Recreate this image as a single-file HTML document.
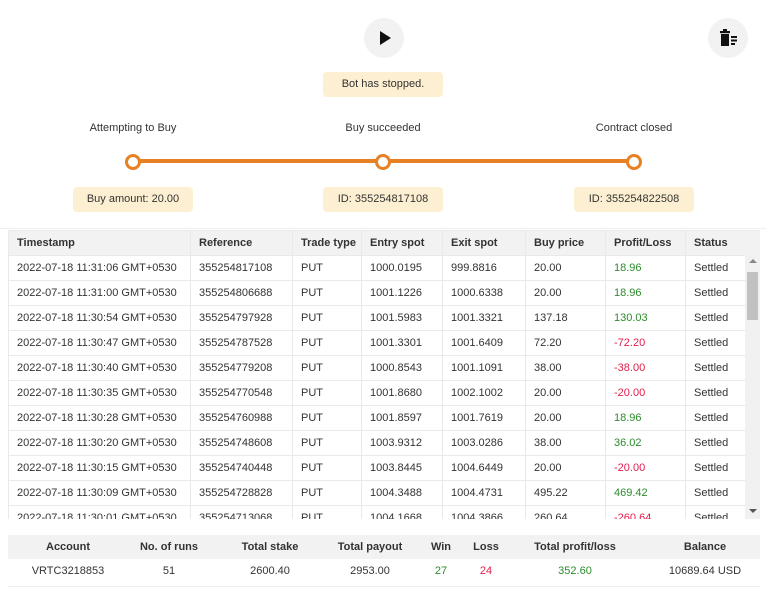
<!DOCTYPE html><html><head><style>
body{margin:0;width:766px;height:589px;background:#fff;font-family:"Liberation Sans",sans-serif;font-size:11px;color:#333;position:relative;overflow:hidden}
.a{position:absolute}
.btn{width:40px;height:40px;border-radius:50%;background:#f2f2f2}
.tip{background:#fdf0d2;border-radius:4px;height:25px;line-height:25px;text-align:center;color:#333}
.lbl{width:160px;text-align:center}
.dot{width:10px;height:10px;border:3px solid #e88024;border-radius:50%;background:#fff}
table{border-collapse:collapse;font-size:11px;table-layout:fixed}
td,th{height:24px;padding:0 0 0 8px;text-align:left;border:1px solid #e9e9e9;white-space:nowrap;overflow:hidden}
th{background:#f2f2f2;font-weight:bold;color:#333}
.g{color:#2c8c2c}.r{color:#e31c4b}
#f td,#f th{text-align:center;border:none;padding:0}
</style></head><body>
<div class="a btn" style="left:364px;top:18px"><svg width="40" height="40"><path d="M16 13v14l11-7z" fill="#111"/></svg></div>
<div class="a btn" style="left:708px;top:18px"><svg width="40" height="40"><rect x="12" y="13" width="10" height="2.2" fill="#111"/><rect x="15" y="11" width="4" height="3" fill="#111"/><path d="M13 16h8v12h-8z" fill="#111"/><rect x="23" y="18" width="6" height="2" fill="#111"/><rect x="23" y="21.5" width="6" height="2" fill="#111"/><rect x="23" y="25" width="4" height="2" fill="#111"/></svg></div>
<div class="a tip" style="left:323px;top:72px;width:120px">Bot has stopped.</div>
<div class="a lbl" style="left:53px;top:122px">Attempting to Buy</div>
<div class="a lbl" style="left:303px;top:122px">Buy succeeded</div>
<div class="a lbl" style="left:554px;top:122px">Contract closed</div>
<div class="a" style="left:133px;top:159px;width:500px;height:4px;background:#e88024"></div>
<div class="a dot" style="left:125px;top:154px"></div>
<div class="a dot" style="left:375px;top:154px"></div>
<div class="a dot" style="left:626px;top:154px"></div>
<div class="a tip" style="left:73px;top:187px;width:120px">Buy amount: 20.00</div>
<div class="a tip" style="left:323px;top:187px;width:120px">ID: 355254817108</div>
<div class="a tip" style="left:574px;top:187px;width:120px">ID: 355254822508</div>
<div class="a" style="left:0;top:228px;width:766px;height:1px;background:#eee"></div>
<div class="a" style="left:8px;top:230px;width:752px;height:289px;overflow:hidden">
<table style="width:752px">
<colgroup><col style="width:182px"><col style="width:102px"><col style="width:69px"><col style="width:81px"><col style="width:83px"><col style="width:80px"><col style="width:80px"><col style="width:75px"></colgroup>
<tr><th>Timestamp</th><th>Reference</th><th>Trade type</th><th>Entry spot</th><th>Exit spot</th><th>Buy price</th><th>Profit/Loss</th><th>Status</th></tr>
<tr><td>2022-07-18 11:31:06 GMT+0530</td><td>355254817108</td><td>PUT</td><td>1000.0195</td><td>999.8816</td><td>20.00</td><td class="g">18.96</td><td>Settled</td></tr>
<tr><td>2022-07-18 11:31:00 GMT+0530</td><td>355254806688</td><td>PUT</td><td>1001.1226</td><td>1000.6338</td><td>20.00</td><td class="g">18.96</td><td>Settled</td></tr>
<tr><td>2022-07-18 11:30:54 GMT+0530</td><td>355254797928</td><td>PUT</td><td>1001.5983</td><td>1001.3321</td><td>137.18</td><td class="g">130.03</td><td>Settled</td></tr>
<tr><td>2022-07-18 11:30:47 GMT+0530</td><td>355254787528</td><td>PUT</td><td>1001.3301</td><td>1001.6409</td><td>72.20</td><td class="r">-72.20</td><td>Settled</td></tr>
<tr><td>2022-07-18 11:30:40 GMT+0530</td><td>355254779208</td><td>PUT</td><td>1000.8543</td><td>1001.1091</td><td>38.00</td><td class="r">-38.00</td><td>Settled</td></tr>
<tr><td>2022-07-18 11:30:35 GMT+0530</td><td>355254770548</td><td>PUT</td><td>1001.8680</td><td>1002.1002</td><td>20.00</td><td class="r">-20.00</td><td>Settled</td></tr>
<tr><td>2022-07-18 11:30:28 GMT+0530</td><td>355254760988</td><td>PUT</td><td>1001.8597</td><td>1001.7619</td><td>20.00</td><td class="g">18.96</td><td>Settled</td></tr>
<tr><td>2022-07-18 11:30:20 GMT+0530</td><td>355254748608</td><td>PUT</td><td>1003.9312</td><td>1003.0286</td><td>38.00</td><td class="g">36.02</td><td>Settled</td></tr>
<tr><td>2022-07-18 11:30:15 GMT+0530</td><td>355254740448</td><td>PUT</td><td>1003.8445</td><td>1004.6449</td><td>20.00</td><td class="r">-20.00</td><td>Settled</td></tr>
<tr><td>2022-07-18 11:30:09 GMT+0530</td><td>355254728828</td><td>PUT</td><td>1004.3488</td><td>1004.4731</td><td>495.22</td><td class="g">469.42</td><td>Settled</td></tr>
<tr><td>2022-07-18 11:30:01 GMT+0530</td><td>355254713068</td><td>PUT</td><td>1004.1668</td><td>1004.3866</td><td>260.64</td><td class="r">-260.64</td><td>Settled</td></tr>
</table>
<div class="a" style="left:737px;top:25px;width:15px;height:264px;background:#f1f1f1"></div>
<div class="a" style="left:739px;top:42px;width:11px;height:48px;background:#c1c1c1"></div>
<div class="a" style="left:741px;top:29px;width:0;height:0;border:4px solid transparent;border-bottom-color:#888;border-top:0"></div>
<div class="a" style="left:741px;top:279px;width:0;height:0;border:4px solid transparent;border-top-color:#555;border-bottom:0"></div>
</div>
<div class="a" style="left:8px;top:535px;width:752px;height:51px;border-bottom:1px solid #eee">
<table id="f" style="width:752px">
<colgroup><col style="width:120px"><col style="width:82px"><col style="width:120px"><col style="width:80px"><col style="width:62px"><col style="width:28px"><col style="width:150px"><col style="width:110px"></colgroup>
<tr><th>Account</th><th>No. of runs</th><th>Total stake</th><th>Total payout</th><th>Win</th><th>Loss</th><th>Total profit/loss</th><th>Balance</th></tr>
<tr><td>VRTC3218853</td><td>51</td><td>2600.40</td><td>2953.00</td><td class="g">27</td><td class="r">24</td><td class="g">352.60</td><td>10689.64 USD</td></tr>
</table></div>
</body></html>
